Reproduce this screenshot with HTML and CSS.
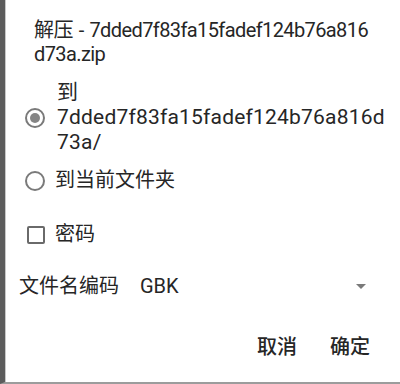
FILE: index.html
```html
<!DOCTYPE html>
<html lang="zh-CN">
<head>
    <meta charset="UTF-8">
    <meta name="viewport" content="width=device-width, initial-scale=1.0">
    <title>解压</title>
    <link rel="stylesheet" href="styles.css">
</head>
<body>
    <div class="screen">
        <div class="dialog">
            <h1 class="dialog__title">解压 - 7dded7f83fa15fadef124b76a816d73a.zip</h1>
            <div class="dialog__body">
                <div class="choices">
                    <label class="choice">
                        <span class="radio radio--on"></span>
                        <span class="choice__text choice__text--wide">到 7dded7f83fa15fadef124b76a816d73a/</span>
                    </label>
                    <label class="choice">
                        <span class="radio"></span>
                        <span class="choice__text">到当前文件夹</span>
                    </label>
                </div>
                <label class="choice choice--check">
                    <span class="checkbox"></span>
                    <span class="choice__text">密码</span>
                </label>
                <div class="encoding">
                    <span class="encoding__label">文件名编码</span>
                    <span class="encoding__value">GBK</span>
                    <span class="encoding__arrow"></span>
                </div>
            </div>
            <div class="dialog__actions">
                <button class="action">取消</button>
                <button class="action">确定</button>
            </div>
        </div>
    </div>
</body>
</html>
```

FILE: styles.css
```css
* {
    box-sizing: border-box;
}
body {
    margin: 0;
    padding: 0;
    background: #ffffff;
    font-family: Roboto, "Noto Sans CJK SC", sans-serif;
    color: #262626;
}
.screen {
    width: 400px;
    height: 384px;
    border-left: 5px solid #5c5c5c;
    border-bottom: 2px solid #9c9c9c;
    overflow: hidden;
}
.dialog {
    height: 100%;
    display: flex;
    flex-direction: column;
    border-left: 1px solid #c8c8c8;
}
.dialog__title {
    margin: 18px 26px 0 28px;
    font-size: 20px;
    font-weight: 400;
    line-height: 24px;
    letter-spacing: -0.6px;
    word-spacing: 1.5px;
    word-break: break-all;
}
.dialog__body {
    display: flex;
    flex-direction: column;
}
.choices {
    display: flex;
    flex-direction: column;
    margin-top: 14px;
}
.choice {
    display: flex;
    align-items: center;
    padding-left: 19px;
    padding-right: 8px;
    font-size: 20px;
    line-height: 25px;
}
.choice__text {
    margin-left: 10px;
    overflow-wrap: anywhere;
}
.choice__text--wide {
    margin-left: 12px;
    font-size: 21px;
    letter-spacing: 0.2px;
}
.choices .choice + .choice {
    margin-top: 13px;
}
.radio {
    flex: none;
    width: 20px;
    height: 20px;
    border: 2px solid #7a7a7a;
    border-radius: 50%;
    display: flex;
    align-items: center;
    justify-content: center;
}
.radio--on::after {
    content: "";
    width: 10px;
    height: 10px;
    border-radius: 50%;
    background: #858585;
}
.choice--check {
    margin-top: 29px;
}
.checkbox {
    flex: none;
    width: 18px;
    height: 18px;
    margin-left: 2px;
    border: 2px solid #6a6a6a;
    border-radius: 2px;
}
.encoding {
    display: flex;
    align-items: center;
    margin-top: 27px;
    padding-left: 13px;
    padding-right: 34px;
    font-size: 20px;
    line-height: 25px;
}
.encoding__value {
    margin-left: 21px;
    flex: 1;
}
.encoding__arrow {
    width: 0;
    height: 0;
    border-left: 5px solid transparent;
    border-right: 5px solid transparent;
    border-top: 5px solid #7a7a7a;
}
.dialog__actions {
    display: flex;
    justify-content: flex-end;
    gap: 33px;
    margin-top: 36px;
    padding-right: 30px;
}
.action {
    background: none;
    border: none;
    padding: 0;
    font-family: Roboto, "Noto Sans CJK SC", sans-serif;
    font-size: 20px;
    font-weight: 500;
    line-height: 25px;
    color: #262626;
    cursor: pointer;
}
```
